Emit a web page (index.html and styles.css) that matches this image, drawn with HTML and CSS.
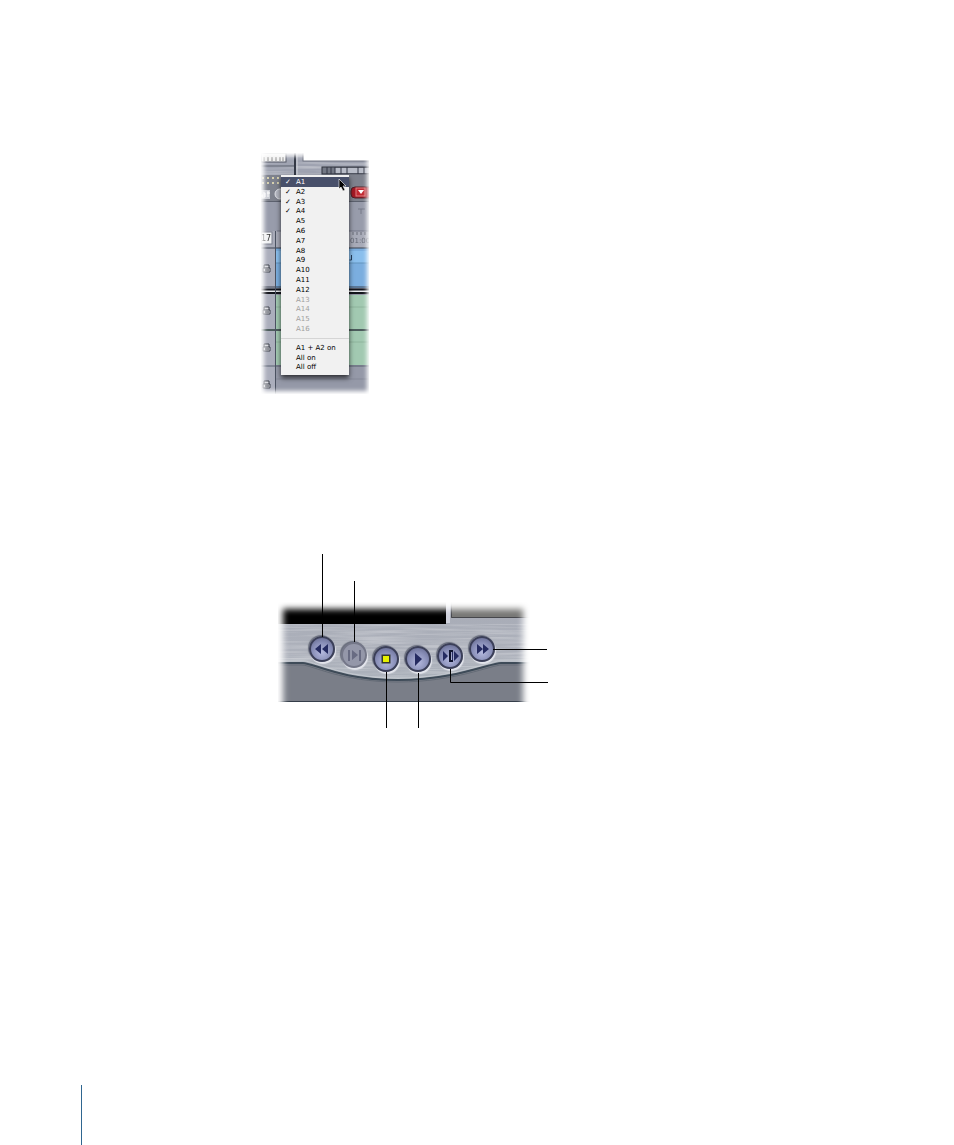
FILE: index.html
```
<!DOCTYPE html>
<html lang="en">
<head>
  <meta charset="UTF-8" />
  <title>Audio tracks menu and transport controls</title>
  <link rel="stylesheet" href="styles.css">
</head>
<body>
  <main class="page">
    <figure class="tracks">
      <svg class="scene" width="108" height="241" viewBox="0 0 108 241" aria-hidden="true">
        <defs>
          <filter id="soft" x="-20%" y="-20%" width="140%" height="140%"><feGaussianBlur stdDeviation="2" /></filter>
          <filter id="softer" x="-20%" y="-20%" width="140%" height="140%"><feGaussianBlur stdDeviation="3" /></filter>
          <filter id="brushed" x="0" y="0" width="100%" height="100%">
            <feTurbulence type="fractalNoise" baseFrequency="0.015 0.5" numOctaves="2" seed="4" />
            <feColorMatrix values="0 0 0 0 1  0 0 0 0 1  0 0 0 0 1  2 0 0 0 -0.8" />
          </filter>
          <mask id="tracksFade"><rect x="3" y="3" width="103" height="235" fill="#fff" filter="url(#soft)" /></mask>
        </defs>
        <g mask="url(#tracksFade)">
          <rect width="108" height="241" fill="#9498a6" />
          <rect width="108" height="22" fill="#9fa3b1" />
          <rect width="108" height="22" filter="url(#brushed)" opacity=".4" />
          <!-- viewer bottoms -->
          <rect width="25" height="9" fill="#f0f0f0" stroke="#555966" />
          <path d="M3 4v4M7 4v4M11 4v4M15 4v4M19 4v4M22 4v4" stroke="#888" />
          <path d="M0 13h33" stroke="#535866" />
          <path d="M34 0v23" stroke="#343946" stroke-width="2" />
          <path d="M36 0v22" stroke="#d3d5dc" />
          <rect x="42" y="-1" width="70" height="9" fill="#fff" stroke="#6f7380" />
          <rect x="61" y="14" width="50" height="7" fill="#747985" stroke="#2e323c" />
          <rect x="74" y="15" width="36" height="5" fill="#b9bdc8" />
          <path d="M66 14v7M70 14v7M74 14v7M80 14v7M86 14v7M97 14v7M103 14v7" stroke="#343946" />
          <!-- tool strip -->
          <rect y="22" width="108" height="26" fill="#7e828d" />
          <path d="M1 25h18M1 30h18" stroke="#d6d0ae" stroke-width="2" stroke-dasharray="2 3" />
          <rect y="37" width="9" height="9" fill="#c9ccd3" />
          <path d="M2 40h2v4H1v-2h3M7 38v6M6 40h3" fill="none" stroke="#fff" />
          <circle cx="19" cy="41" r="5" fill="#b4b7c1" stroke="#dfe1e6" />
          <rect x="90" y="34" width="22" height="11" rx="4" fill="#a41924" stroke="#4f2229" />
          <rect x="95" y="35" width="9" height="8" fill="#c22831" stroke="#dc7f80" />
          <path d="M97 37h6l-3 4z" fill="#fff" />
          <path d="M0 48.500h108" stroke="#5c616e" />
          <rect y="49" width="108" height="29" fill="#989cab" />
          <path d="M97 56h7M100 56v5" stroke="#777b89" />
          <!-- ruler -->
          <rect y="78" width="108" height="17" fill="#a8abb8" />
          <path d="M16 78h92" stroke="#747988" />
          <rect x="0" y="79" width="11" height="12" fill="#f0f1f3" stroke="#7b7f8c" />
          <text x="0" y="88" class="scene-text">17</text>
          <text x="89" y="90" class="scene-text ruler-text">01:00</text>
          <path d="M92 79v3M96 79v3M100 79v3M104 79v3" stroke="#686c79" />
          <!-- lanes -->
          <rect y="95" width="14" height="146" fill="#abaebc" />
          <rect x="15" y="95" width="93" height="40" fill="#7baedf" />
          <rect x="15" y="98" width="93" height="12" fill="#8abfed" />
          <path d="M15 110h93" stroke="#6393bd" />
          <path d="M0 95h108M0 134h108" stroke="#3d4250" />
          <path d="M90.500 102v5h-2" fill="none" stroke="#243d5b" />
          <rect y="136" width="108" height="5" fill="#e9ebef" />
          <path d="M0 136.500h108M0 140h108" stroke="#13151c" stroke-width="2" />
          <rect x="15" y="142" width="93" height="70" fill="#a2c9b1" />
          <path d="M15 154h93M15 189h93" stroke="#8eb49c" />
          <path d="M0 177h108" stroke="#4c5c5c" stroke-width="2" />
          <path d="M0 213h108" stroke="#596170" />
          <rect x="15" y="214" width="93" height="27" fill="#9599a8" />
          <path d="M15 226h93" stroke="#858998" />
          <path d="M14.500 78v163" stroke="#4b5261" />
          <g fill="#d9dae0" stroke="#3c404b">
            <path d="M3 115v-3h5v3M2 115h7v4H2zM4 117h4" />
            <path d="M3 157v-3h5v3M2 157h7v4H2zM4 159h4" />
            <path d="M3 194v-3h5v3M2 194h7v4H2zM4 196h4" />
            <path d="M3 231v-3h5v3M2 231h7v4H2zM4 233h4" />
          </g>
        </g>
      </svg>
      <ul class="menu">
        <li class="selected"><button><span class="tick">✓</span>A1</button></li>
        <li><button><span class="tick">✓</span>A2</button></li>
        <li><button><span class="tick">✓</span>A3</button></li>
        <li><button><span class="tick">✓</span>A4</button></li>
        <li><button>A5</button></li>
        <li><button>A6</button></li>
        <li><button>A7</button></li>
        <li><button>A8</button></li>
        <li><button>A9</button></li>
        <li><button>A10</button></li>
        <li><button>A11</button></li>
        <li><button>A12</button></li>
        <li><button disabled>A13</button></li>
        <li><button disabled>A14</button></li>
        <li><button disabled>A15</button></li>
        <li><button disabled>A16</button></li>
        <li class="divider"></li>
        <li><button>A1 + A2 on</button></li>
        <li><button>All on</button></li>
        <li><button>All off</button></li>
      </ul>
      <svg class="cursor" width="9" height="14" viewBox="0 0 9 14" aria-hidden="true">
        <path d="M1 1v10l2-2 2 4 2-1-2-4h3z" fill="#000" stroke="#fff" stroke-width=".6" />
      </svg>
    </figure>

    <figure class="transport">
      <svg class="scene" width="271" height="174" viewBox="0 0 271 174" aria-hidden="true">
        <defs>
          <linearGradient id="metal" x1="0" y1="0" x2="0" y2="1">
            <stop offset="0" stop-color="#a7abb6" />
            <stop offset=".5" stop-color="#adb1bb" />
            <stop offset="1" stop-color="#a8b0b9" />
          </linearGradient>
          <mask id="transportFade">
            <rect x="5" y="55" width="240" height="120" fill="#fff" filter="url(#softer)" />
          </mask>
          <clipPath id="sceneClip"><rect y="48" width="252" height="100" /></clipPath>
        </defs>
        <g clip-path="url(#sceneClip)">
          <g mask="url(#transportFade)">
            <rect y="48" width="252" height="100" fill="url(#metal)" />
            <rect y="70" width="252" height="58" filter="url(#brushed)" opacity=".35" />
            <rect y="48" width="168" height="22" fill="#000" />
            <rect x="168" y="48" width="4" height="21" fill="#cfd1dc" />
            <rect x="173" y="48" width="80" height="16" fill="#777775" />
            <path d="M173.500 48v15.500H252" fill="none" stroke="#46474c" />
            <path d="M0 109h25c10 0 38 17 95 17s92-17 103-17h29v39H0z" fill="#7a7e88" />
            <path d="M0 109h25c10 0 38 17 95 17s92-17 103-17h29" fill="none" stroke="#3e4b58" stroke-width="2" />
            <path d="M0 111h24c10 0 39 17 96 17s93-17 104-17h28" fill="none" stroke="#646b76" />
            <path d="M0 107h26c10 0 38 17 94 17s92-17 102-17h30" fill="none" stroke="#d1d5da" opacity=".6" />
            <path d="M0 147.500h252" stroke="#343d49" />
          </g>
        </g>
      </svg>

      <button class="knob rewind" aria-label="Play reverse">
        <svg width="26" height="26" viewBox="0 0 26 26"><path d="M12 8v10l-6-5zM19 8v10l-6-5z" /></svg>
      </button>
      <button class="knob to-out" aria-label="Play in to out" disabled>
        <svg width="26" height="26" viewBox="0 0 26 26"><path d="M7 8h2v11H7zM11 8l6 5-6 5zM18 8h2v11h-2z" /></svg>
      </button>
      <button class="knob stop" aria-label="Stop">
        <svg width="26" height="26" viewBox="0 0 26 26"><path class="lamp" d="M10 10h6v6h-6z" /></svg>
      </button>
      <button class="knob play" aria-label="Play">
        <svg width="26" height="26" viewBox="0 0 26 26"><path d="M10 7l7 6-7 7z" /></svg>
      </button>
      <button class="knob around" aria-label="Play around current frame">
        <svg width="26" height="26" viewBox="0 0 26 26"><path d="M6 8l5 5-5 5zM17 8l5 5-5 5z" /><path class="frame" d="M12 7h4v2h-2v8h2v2h-4z" /><path d="M15 9h1v8h-1z" /></svg>
      </button>
      <button class="knob forward" aria-label="Fast forward">
        <svg width="26" height="26" viewBox="0 0 26 26"><path d="M8 8l6 5-6 5zM14 8l6 5-6 5z" /></svg>
      </button>

      <svg class="callouts" width="271" height="174" viewBox="0 0 271 174" aria-hidden="true">
        <path d="M44.500 0v83M76.500 27v61M108.500 118v56M140.500 119v55M172.500 115v13.500H270M215 95.500h54" />
      </svg>
    </figure>
  </main>
  <footer class="page-rule"></footer>
</body>
</html>
```
FILE: styles.css
```
body {
  margin: 0;
  min-height: 100vh;
  display: flex;
  flex-direction: column;
  background: #fff;
  color: #000;
  font-family: "DejaVu Sans", sans-serif;
}
.page {
  padding: 153px 0 0 261px;
}
figure {
  margin: 0;
  position: relative;
}
.scene {
  display: block;
}
.scene-text {
  font-size: 8px;
  fill: #333;
}
.ruler-text {
  font-size: 7px;
  fill: #666a77;
}
button {
  border: none;
  padding: 0;
  background: none;
  font: inherit;
  color: inherit;
}

/* tracks menu */
.tracks {
  width: 108px;
}
.menu {
  box-sizing: border-box;
  position: absolute;
  left: 20px;
  top: 22px;
  width: 68px;
  height: 200px;
  margin: 0;
  padding: 2px 0 3px;
  list-style: none;
  display: flex;
  flex-direction: column;
  background: #f1f1f1;
  box-shadow: 0 3px 5px rgba(0,0,0,0.7);
  font-size: 7px;
  line-height: 10px;
}
.menu li {
  flex: 1;
  min-height: 0;
}
.menu button {
  display: block;
  position: relative;
  width: 100%;
  height: 100%;
  padding-left: 15px;
  text-align: left;
}
.menu button:disabled {
  color: #a0a0a0;
}
.menu .selected {
  background: #48506a;
  color: #fff;
}
.menu .divider {
  border-top: 1px solid #d5d5d5;
  margin-top: 4px;
  flex: 0 0 4px;
}
.tick {
  position: absolute;
  left: 4px;
}
.cursor {
  position: absolute;
  left: 77px;
  top: 25px;
}

/* transport buttons */
.transport {
  width: 271px;
  margin: 160px 0 0 17px;
}
.knob {
  position: absolute;
  width: 26px;
  height: 26px;
  border-radius: 50%;
  border: 2px solid #3b3f58;
  background: radial-gradient(circle at 50% 65%, #b4b9de, #878db6 55%, #5b6085);
  box-shadow: 1px 2px 1px #e4e6ed, -1px -1px 1px #686d7b;
}
.knob svg {
  display: block;
  margin: -2px;
  fill: #252b61;
}
.knob:disabled {
  border-color: #747788;
  background: #9497a9;
}
.knob:disabled svg {
  fill: #686b82;
}
.knob .lamp {
  fill: #e6f000;
  stroke: #34382c;
  stroke-width: 3;
  paint-order: stroke;
}
.knob .frame {
  fill: #10142f;
}
.rewind {
  left: 31px;
  top: 82px;
}
.to-out {
  left: 63px;
  top: 88px;
}
.stop {
  left: 95px;
  top: 92px;
}
.play {
  left: 127px;
  top: 92px;
}
.around {
  left: 159px;
  top: 89px;
}
.forward {
  left: 191px;
  top: 82px;
}
.callouts {
  position: absolute;
  left: 0;
  top: 0;
  fill: none;
  stroke: #000;
  pointer-events: none;
}

/* rule at the page foot */
.page-rule {
  height: 60px;
  margin: auto 0 0 81px;
  border-left: 1px solid #2f6690;
}
```
